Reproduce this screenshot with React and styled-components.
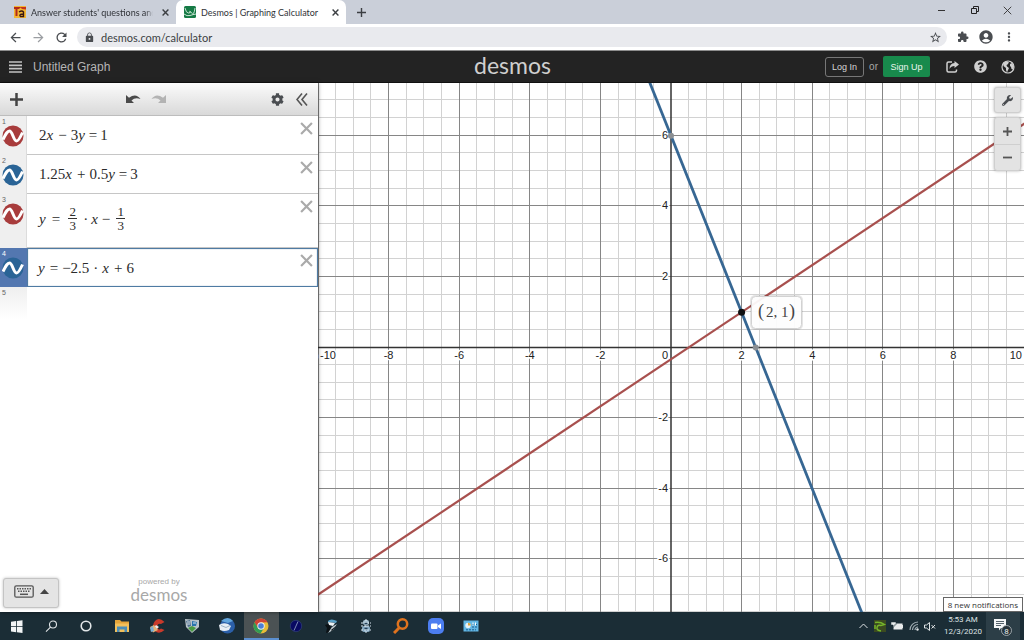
import React from "react";

import styled, { createGlobalStyle, css } from "styled-components";
import {
  MdAccountCircle,
  MdArrowBack,
  MdArrowForward,
  MdExtension,
  MdLock,
  MdMoreVert,
  MdRefresh,
  MdStarBorder,
} from "react-icons/md";
import { FaCog, FaQuestionCircle, FaWrench } from "react-icons/fa";

const GlobalStyle = createGlobalStyle`
  * {
    box-sizing: border-box;
  }
  body {
    margin: 0;
    overflow: hidden;
    font-family: "Liberation Sans", Arial, sans-serif;
  }
  button {
    margin: 0;
    padding: 0;
    border: 0;
    background: none;
    font: inherit;
    color: inherit;
  }
  svg {
    display: block;
    flex-shrink: 0;
  }
`;

const Page = styled.div`
  display: flex;
  flex-direction: column;
  height: 100vh;
  background: #fff;
`;

const IconButton = styled.button`
  display: flex;
  align-items: center;
  justify-content: center;
  flex-shrink: 0;
  width: ${(props) => props.$width || 24}px;
  height: ${(props) => props.$height || 24}px;
  color: ${(props) => props.$color || "#4a4d51"};
`;

/* browser window */

const TabStrip = styled.div`
  display: flex;
  height: 24px;
  background: #cacfd9;
  font-family: Lato, "Noto Sans", sans-serif;
  font-size: 9px;
`;

const Tab = styled.div`
  display: flex;
  align-items: center;
  gap: 5px;
  width: ${(props) => (props.$active ? 170 : 176)}px;
  padding-left: ${(props) => (props.$active ? 8 : 14)}px;
  border-radius: 7px 7px 0 0;
  color: #303338;
  background: ${(props) => (props.$active ? "#fff" : "transparent")};
`;

const TabTitle = styled.span`
  flex: 1;
  overflow: hidden;
  white-space: nowrap;
  ${(props) =>
    props.$fade &&
    css`
      margin-right: -4px;
      mask-image: linear-gradient(to right, #000 94%, transparent);
    `}
`;

const WindowControls = styled.div`
  display: flex;
  margin-left: auto;
  height: 20px;
`;

const AddressBar = styled.div`
  display: flex;
  align-items: center;
  height: 27px;
  padding-left: 4px;
  padding-right: 3px;
  border-bottom: 1px solid #8d8d8d;
  background: #fff;
`;

const UrlBox = styled.label`
  display: flex;
  align-items: center;
  flex: 1;
  height: 20px;
  margin: 0 5px 0 4px;
  padding-left: 7px;
  border-radius: 10px;
  background: #e9eaee;
  color: #4a4d51;
`;

const UrlInput = styled.input`
  flex: 1;
  min-width: 0;
  margin-left: 6px;
  padding: 0;
  border: 0;
  outline: 0;
  background: none;
  font-family: Lato, "Noto Sans", sans-serif;
  font-size: 11px;
  color: #3c3f43;
`;

/* calculator header */

const Header = styled.header`
  display: grid;
  grid-template-columns: 1fr auto 1fr;
  align-items: center;
  height: 32px;
  padding: 0 2px 0 3px;
  background: #232323;
  border-bottom: 1px solid #111;
  color: #c4c4c4;
  font-size: 12px;
`;

const HeaderSide = styled.div`
  display: flex;
  align-items: center;
  justify-content: ${(props) => (props.$right ? "flex-end" : "flex-start")};
`;

const GraphTitle = styled.button`
  margin-left: 6px;
  color: #b5b5b5;
`;

const Brand = styled.span`
  font-family: Lato, sans-serif;
  font-size: ${(props) => (props.$small ? 17 : 23)}px;
  line-height: ${(props) => (props.$small ? 18 : 28)}px;
  padding-bottom: ${(props) => (props.$small ? 0 : 3)}px;
  color: ${(props) => (props.$small ? "#a8a8a8" : "#cfcfcf")};
`;

const LogIn = styled.button`
  width: 39px;
  height: 20px;
  border: 1px solid #777;
  border-radius: 3px;
  color: #d6d6d6;
  font-size: 9px;
`;

const Or = styled.span`
  margin: 0 5px;
  font-size: 10px;
  color: #a8a8a8;
`;

const SignUp = styled.button`
  width: 47px;
  height: 21px;
  margin-right: 8px;
  border-radius: 2px;
  background: #188a4c;
  color: #eaf6ef;
  font-size: 9px;
`;

/* expression list */

const Main = styled.main`
  display: flex;
  flex: 1;
  min-height: 0;
`;

const Sidebar = styled.section`
  position: relative;
  z-index: 1;
  display: flex;
  flex-direction: column;
  width: 318px;
  background: #fff;
  box-shadow: 0 0 4px rgba(0, 0, 0, 0.5);
`;

const Toolbar = styled.div`
  display: flex;
  align-items: center;
  height: 33px;
  padding: 0 3px 0 4px;
  border-bottom: 1px solid #bdbdbd;
  background: linear-gradient(to bottom, #fbfbfb, #d9d9d9);
`;

const ToolbarSpace = styled.div`
  flex: ${(props) => props.$grow};
`;

const ExpressionList = styled.ol`
  margin: 0;
  padding: 0;
  list-style: none;
`;

const Row = styled.li`
  display: flex;
  height: ${(props) => (props.$tall ? 54 : 39)}px;
`;

const Gutter = styled.div`
  width: 27px;
  padding: 3px 2px 0 2px;
  border-right: 1px solid ${(props) => (props.$active ? "#5377b0" : "#dcdcdc")};
  background: ${(props) => (props.$active ? "#5377b0" : "#efefef")};
  color: ${(props) => (props.$active ? "#fff" : "#666")};
  font-size: 7px;
  line-height: 6px;
  ${(props) =>
    props.$last &&
    css`
      border-right: 0;
      background: linear-gradient(to bottom, #efefef, #fff 33px);
    `}
`;

const Expression = styled.div`
  display: flex;
  flex: 1;
  align-items: center;
  justify-content: space-between;
  padding-left: 12px;
  padding-bottom: ${(props) => (props.$tall ? 4 : 0)}px;
  border-bottom: 1px solid #c6c6c6;
  ${(props) =>
    props.$active &&
    css`
      padding-left: 10px;
      border: 1px solid #4f7ba3;
      box-shadow: inset 0 0 1px #4f7ba3;
    `}
`;

const Remove = styled(IconButton)`
  align-self: flex-start;
  margin-right: ${(props) => (props.$active ? 1 : 2)}px;
  margin-top: ${(props) => (props.$active ? 1 : 2)}px;
`;

const Formula = styled.span`
  display: inline-flex;
  align-items: center;
  font-family: "Liberation Serif", "Times New Roman", serif;
  font-size: 15px;
  line-height: 18px;
  color: #2b2b2b;
`;

const Variable = styled.i`
  margin-right: 1px;
`;

const Operator = styled.span`
  margin: 0 ${(props) => props.$space || 4}px;
`;

const Fraction = styled.span`
  display: inline-flex;
  flex-direction: column;
  align-items: center;
  width: 9px;
  margin: 0 3px;
  font-size: 13px;
  line-height: 13px;
`;

const Numerator = styled.span`
  width: 100%;
  border-bottom: 1px solid #333;
  text-align: center;
`;

const SidebarFooter = styled.footer`
  display: grid;
  grid-template-columns: 1fr auto 1fr;
  align-items: end;
  margin-top: auto;
  padding: 0 3px 4px;
`;

const KeyboardButton = styled.button`
  display: flex;
  align-items: center;
  justify-content: center;
  gap: 6px;
  width: 56px;
  height: 30px;
  padding-bottom: 3px;
  border: 1px solid #c4c4c4;
  border-radius: 3px;
  background: #e4e4e4;
  box-shadow: 0 0 3px rgba(0, 0, 0, 0.25);
`;

const PoweredBy = styled.div`
  display: flex;
  flex-direction: column;
  align-items: center;
  padding-bottom: 4px;
  color: #a8a8a8;
  font-size: 8px;
  line-height: 9px;
`;

/* graph paper */

const GraphPaper = styled.section`
  position: relative;
  flex: 1;
  min-width: 0;
  overflow: hidden;

  > svg {
    width: 100%;
    height: 100%;
  }
`;

const GraphControls = styled.div`
  position: absolute;
  top: 4px;
  right: 3px;
  display: flex;
  flex-direction: column;
  gap: 4px;
`;

const ControlGroup = styled.div`
  border: 1px solid #cfcfcf;
  border-radius: 3px;
  background: #e3e3e3;
  box-shadow: 0 0 3px rgba(0, 0, 0, 0.3);

  > button + button {
    border-top: 1px solid #cfcfcf;
  }
`;

const AxisLabel = styled.text`
  font-family: "Liberation Sans", Arial, sans-serif;
  font-size: 11px;
  fill: #222;
  stroke: #fff;
  stroke-width: 3px;
  paint-order: stroke;
`;

const PointLabel = styled.text`
  font-family: "Liberation Serif", "Times New Roman", serif;
  font-size: ${(props) => (props.$bracket ? 18 : 15)}px;
  fill: #444;
`;

/* windows taskbar */

const Taskbar = styled.footer`
  position: relative;
  display: flex;
  align-items: stretch;
  height: 28px;
  padding-right: 4px;
  background: #1b2d36;
  color: #dfe3e5;
  font-family: Roboto, "Noto Sans", sans-serif;
`;

const Apps = styled.nav`
  display: flex;
  width: 488px;
`;

const AppButton = styled.button`
  display: flex;
  flex: 1;
  align-items: center;
  justify-content: center;
  ${(props) =>
    props.$active &&
    css`
      background: #4b5254;
      box-shadow: inset 0 -2px #5b8fd0;
    `}
`;

const Tray = styled.div`
  display: flex;
  align-items: center;
  margin-left: auto;
`;

const Clock = styled.time`
  width: 46px;
  margin-left: 2px;
  padding-bottom: 1px;
  font-size: 8px;
  line-height: 12px;
  text-align: center;
  white-space: nowrap;
`;

const NotificationButton = styled.button`
  display: flex;
  align-items: center;
  justify-content: center;
  align-self: stretch;
  width: 34px;
  background: #2c3e47;
`;

const NotificationTip = styled.div`
  position: absolute;
  right: 1px;
  bottom: 28px;
  padding: 0 4px;
  border: 1px solid #666;
  background: #fff;
  color: #333;
  font-family: "Open Sans", "Noto Sans", sans-serif;
  font-size: 8px;
  line-height: 13px;
  white-space: nowrap;
`;

const Cross = ({ size, color, weight }) => (
  <svg width={size} height={size} viewBox="0 0 12 12">
    <path d="M1 1L11 11M11 1L1 11" stroke={color} strokeWidth={weight} />
  </svg>
);

const CurveBadge = ({ color, label }) => (
  <IconButton $width={22} $height={22} aria-label={label}>
    <svg width="22" height="22" viewBox="0 0 22 22">
      <circle cx="11" cy="11" r="10.500" fill={color} />
      <path
        d="M1 14.500C4 8.500 5.500 6 7.500 6C10.500 6 11.500 16 14.500 16C16.500 16 18.500 12 20.500 7.500"
        fill="none"
        stroke="#fff"
        strokeWidth="3"
      />
    </svg>
  </IconButton>
);

const BrowserTabs = () => (
  <TabStrip>
    <Tab>
      <svg width="12" height="12" viewBox="0 0 12 12">
        <rect width="12" height="12" fill="#f2b632" />
        <path d="M0 1H7L5 3H3.500V10H1.500V3H0Z" fill="#b22a1a" />
        <path d="M5 6Q8 4 9.500 6V10.500H6.500Q4.500 8 9 8" fill="none" stroke="#3a1710" strokeWidth="1.400" />
        <path d="M6 1H12V3.500L8 3Z" fill="#c5331d" />
      </svg>
      <TabTitle $fade>Answer students' questions and be</TabTitle>
      <IconButton $width={22} aria-label="Close tab">
        <Cross size={7} color="#3c3f43" weight={2.4} />
      </IconButton>
    </Tab>
    <Tab $active>
      <svg width="12" height="12" viewBox="0 0 12 12">
        <rect width="12" height="12" rx="1.500" fill="#157a45" />
        <path d="M1 2Q2 7 4.500 7T6 5.500T7.500 7T11 2" fill="none" stroke="#d9efe1" strokeWidth=".9" />
        <path d="M0 8Q3 10.500 6 9.500T12 8" fill="none" stroke="#d9efe1" strokeWidth=".9" />
      </svg>
      <TabTitle>Desmos | Graphing Calculator</TabTitle>
      <IconButton $width={22} aria-label="Close tab">
        <Cross size={7} color="#3c3f43" weight={2.4} />
      </IconButton>
    </Tab>
    <IconButton $width={31} aria-label="New tab">
      <svg width="9" height="9" viewBox="0 0 9 9">
        <path d="M4.500 0V9M0 4.500H9" stroke="#3c3f43" strokeWidth="1.400" />
      </svg>
    </IconButton>
    <WindowControls>
      <IconButton $width={33} $height={20} aria-label="Minimize">
        <svg width="8" height="8" viewBox="0 0 8 8">
          <path d="M0 4.500H7" stroke="#333" />
        </svg>
      </IconButton>
      <IconButton $width={33} $height={20} aria-label="Restore">
        <svg width="8" height="8" viewBox="0 0 8 8">
          <path d="M.5 2.500H5.500V7.500H.5ZM2.500 2.500V.5H7.500V5.500H5.500" fill="none" stroke="#222" />
        </svg>
      </IconButton>
      <IconButton $width={33} $height={20} aria-label="Close">
        <Cross size={9} color="#333" weight={1.2} />
      </IconButton>
    </WindowControls>
  </TabStrip>
);

const BrowserBar = () => (
  <AddressBar>
    <IconButton $width={23} aria-label="Back">
      <MdArrowBack size={15} />
    </IconButton>
    <IconButton $width={23} $color="#9b9ea2" aria-label="Forward">
      <MdArrowForward size={15} />
    </IconButton>
    <IconButton $width={23} aria-label="Reload">
      <MdRefresh size={15} />
    </IconButton>
    <UrlBox>
      <MdLock size={11} />
      <UrlInput aria-label="Address" defaultValue="desmos.com/calculator" />
      <IconButton aria-label="Bookmark">
        <MdStarBorder size={13} />
      </IconButton>
    </UrlBox>
    <IconButton $width={22} aria-label="Extensions">
      <MdExtension size={12} />
    </IconButton>
    <IconButton $width={23} aria-label="Profile">
      <MdAccountCircle size={16} />
    </IconButton>
    <IconButton aria-label="Menu">
      <MdMoreVert size={14} />
    </IconButton>
  </AddressBar>
);

const CalculatorHeader = () => (
  <Header>
    <HeaderSide>
      <IconButton $color="#c4c4c4" aria-label="Open graphs">
        <svg width="13" height="12" viewBox="0 0 13 12">
          <path d="M0 1H13M0 4.300H13M0 7.700H13M0 11H13" stroke="currentColor" strokeWidth="1.700" />
        </svg>
      </IconButton>
      <GraphTitle>Untitled Graph</GraphTitle>
    </HeaderSide>
    <Brand>desmos</Brand>
    <HeaderSide $right>
      <LogIn>Log In</LogIn>
      <Or>or</Or>
      <SignUp>Sign Up</SignUp>
      <IconButton $width={28} $color="#d0d0d0" aria-label="Share">
        <svg width="13" height="12" viewBox="0 0 13 12">
          <path d="M6 1H2.500Q1 1 1 2.500V9.500Q1 11 2.500 11H9Q10.500 11 10.500 9.500V8.500" fill="none" stroke="currentColor" strokeWidth="1.500" />
          <path d="M8.500 0L13 3.500L8.500 7V5Q5 5 3.500 8Q3.500 2.500 8.500 2Z" fill="currentColor" />
        </svg>
      </IconButton>
      <IconButton $width={28} $color="#d0d0d0" aria-label="Help">
        <FaQuestionCircle size={13} />
      </IconButton>
      <IconButton $width={28} $color="#d0d0d0" aria-label="Language">
        <svg width="14" height="14" viewBox="0 0 14 14">
          <circle cx="7" cy="7" r="6" fill="none" stroke="currentColor" strokeWidth="1.200" />
          <path d="M2 3L6 1.200L8 2.500L6.500 4.500L5.500 5L6 6.500L8 8L7 10L6 12.500L5 10V8L2.500 6ZM9 4L11 3L13 6.500L12 9.500L10.500 9L10 7L9 6Z" fill="currentColor" />
        </svg>
      </IconButton>
    </HeaderSide>
  </Header>
);

const expressions = [
  {
    color: "#a83c3c",
    formula: (
      <>
        2<Variable>x</Variable>
        <Operator>−</Operator>3<Variable>y</Variable>
        <Operator $space={3}>=</Operator>1
      </>
    ),
  },
  {
    color: "#2a6496",
    formula: (
      <>
        1.25<Variable>x</Variable>
        <Operator>+</Operator>0.5<Variable>y</Variable>
        <Operator $space={3}>=</Operator>3
      </>
    ),
  },
  {
    color: "#a83c3c",
    tall: true,
    formula: (
      <>
        <Variable>y</Variable>
        <Operator $space={5}>=</Operator>
        <Fraction>
          <Numerator>2</Numerator>3
        </Fraction>
        <Operator $space={3}>·</Operator>
        <Variable>x</Variable>
        <Operator $space={3}>−</Operator>
        <Fraction>
          <Numerator>1</Numerator>3
        </Fraction>
      </>
    ),
  },
  {
    color: "#2a6496",
    active: true,
    formula: (
      <>
        <Variable>y</Variable>
        <Operator>=</Operator>−2.5
        <Operator>·</Operator>
        <Variable>x</Variable>
        <Operator>+</Operator>6
      </>
    ),
  },
];

const ExpressionPanel = () => (
  <Sidebar>
    <Toolbar>
      <IconButton aria-label="Add item">
        <svg width="13" height="13" viewBox="0 0 13 13">
          <path d="M6.500 0V13M0 6.500H13" stroke="#444" strokeWidth="2.500" />
        </svg>
      </IconButton>
      <ToolbarSpace $grow={92} />
      <IconButton $width={26} aria-label="Undo">
        <svg width="16" height="12" viewBox="0 0 16 12">
          <path d="M1 2V10H9L6.500 7.500Q10 4 15.500 6Q11 -.5 4 4.700Z" fill="#4a4a4a" />
        </svg>
      </IconButton>
      <IconButton $width={26} aria-label="Redo">
        <svg width="16" height="12" viewBox="0 0 16 12">
          <path d="M15 2V10H7L9.500 7.500Q6 4 .5 6Q5 -.5 12 4.700Z" fill="#b3b3b3" />
        </svg>
      </IconButton>
      <ToolbarSpace $grow={93} />
      <IconButton aria-label="Edit list">
        <FaCog size={13} />
      </IconButton>
      <IconButton $width={26} aria-label="Hide list">
        <svg width="12" height="13" viewBox="0 0 12 13">
          <path d="M6 .5L1 6.500L6 12.500M11 .5L6 6.500L11 12.500" fill="none" stroke="#555" strokeWidth="1.600" />
        </svg>
      </IconButton>
    </Toolbar>
    <ExpressionList>
      {expressions.map(({ color, formula, active, tall }, index) => (
        <Row key={index} $tall={tall}>
          <Gutter $active={active}>
            {index + 1}
            <CurveBadge color={color} label={`Hide expression ${index + 1}`} />
          </Gutter>
          <Expression $active={active} $tall={tall}>
            <Formula>{formula}</Formula>
            <Remove $width={20} $height={20} $active={active} aria-label="Delete expression">
              <Cross size={13} color="#aaa" weight={2} />
            </Remove>
          </Expression>
        </Row>
      ))}
      <Row>
        <Gutter $last>5</Gutter>
      </Row>
    </ExpressionList>
    <SidebarFooter>
      <KeyboardButton aria-label="Show keypad">
        <svg width="20" height="13" viewBox="0 0 20 13">
          <rect x=".8" y=".8" width="18.400" height="11.400" rx="1.500" fill="none" stroke="#555" strokeWidth="1.300" />
          <path d="M3 3.700H17M4 6.300H16" stroke="#555" strokeWidth="1.500" strokeDasharray="1.500 1" />
          <path d="M6 9.300H14" stroke="#555" strokeWidth="1.500" />
        </svg>
        <svg width="9" height="5" viewBox="0 0 9 5">
          <path d="M0 5L4.500 0L9 5Z" fill="#444" />
        </svg>
      </KeyboardButton>
      <PoweredBy>
        powered by
        <Brand $small>desmos</Brand>
      </PoweredBy>
    </SidebarFooter>
  </Sidebar>
);

const UNIT = 35.3;
const toX = (x) => 353 + x * UNIT;
const toY = (y) => 264.5 - y * UNIT;
const halfSteps = Array.from({ length: 121 }, (_, i) => (i - 60) / 2);
const minorSteps = halfSteps.filter((n) => n % 2 !== 0);
const majorSteps = halfSteps.filter((n) => n % 2 === 0 && n !== 0);

// centre every line on a whole pixel
const gridPath = (steps) =>
  steps
    .map((n) => `M${Math.round(toX(n) - 0.5) + 0.5} -400V900M-700 ${Math.round(toY(n) - 1) + 0.5}H1400`)
    .join("");

const Graph = () => (
  <GraphPaper>
    <svg viewBox="0 0 706 529" preserveAspectRatio="xMidYMid slice" role="img" aria-label="Graph">
      <path d={gridPath(minorSteps)} stroke="#d2d2d2" />
      <path d={gridPath(majorSteps)} stroke="#868686" />
      <path d="M353 -400V900M-700 264.500H1400" stroke="#333" strokeWidth="1.500" />
      {[-8, -6, -4, -2, 2, 4, 6, 8].map((n) => (
        <AxisLabel key={n} x={toX(n)} y="276" textAnchor="middle">
          {n}
        </AxisLabel>
      ))}
      <AxisLabel x="2" y="276">-10</AxisLabel>
      <AxisLabel x="704" y="276" textAnchor="end">10</AxisLabel>
      <AxisLabel x="350" y="276" textAnchor="end">0</AxisLabel>
      {[-6, -4, -2, 2, 4, 6].map((n) => (
        <AxisLabel key={n} x="350" y={toY(n) + 3} textAnchor="end">
          {n}
        </AxisLabel>
      ))}
      <path
        d={`M${toX(-20)} ${toY(-41 / 3)}L${toX(20)} ${toY(13)}`}
        stroke="#a8504e"
        strokeWidth="2.200"
      />
      <path
        d={`M${toX(-4)} ${toY(16)}L${toX(12)} ${toY(-24)}`}
        stroke="#376793"
        strokeWidth="2.800"
      />
      <circle cx={toX(0)} cy={toY(6)} r="3" fill="#8b8f93" />
      <circle cx={toX(2.4)} cy={toY(0)} r="3" fill="#8b8f93" />
      <circle cx={toX(2)} cy={toY(1)} r="3.500" fill="#111" />
      <rect x="432" y="212" width="53" height="35" rx="5" fill="#000" opacity=".1" />
      <rect x="433.500" y="213.500" width="50" height="32" rx="4" fill="#fff" fillOpacity=".93" stroke="#d2d2d2" />
      <PointLabel $bracket x="440" y="234">(</PointLabel>
      <PointLabel x="448" y="234">2, 1</PointLabel>
      <PointLabel $bracket x="471" y="234">)</PointLabel>
    </svg>
    <GraphControls>
      <ControlGroup>
        <IconButton $width={25} aria-label="Graph settings">
          <FaWrench size={11} />
        </IconButton>
      </ControlGroup>
      <ControlGroup>
        <IconButton $width={25} $height={26} aria-label="Zoom in">
          <svg width="9" height="9" viewBox="0 0 9 9">
            <path d="M4.500 0V9M0 4.500H9" stroke="#555" strokeWidth="1.800" />
          </svg>
        </IconButton>
        <IconButton $width={25} $height={26} aria-label="Zoom out">
          <svg width="9" height="9" viewBox="0 0 9 9">
            <path d="M0 4.500H9" stroke="#555" strokeWidth="1.800" />
          </svg>
        </IconButton>
      </ControlGroup>
    </GraphControls>
  </GraphPaper>
);

const apps = [
  {
    name: "Start",
    icon: <path d="M2 3.700L7.200 3V8.200H2ZM8 2.900L13.500 2.200V8.200H8ZM2 9H7.200V14.200L2 13.500ZM8 9H13.500V15L8 14.300Z" fill="#f2f4f5" />,
  },
  {
    name: "Search",
    icon: (
      <g fill="none" stroke="#e2e6e8" strokeWidth="1.100">
        <circle cx="9" cy="6.500" r="3.500" />
        <path d="M6.500 9.200L2 13.700" />
      </g>
    ),
  },
  {
    name: "Cortana",
    icon: <circle cx="7" cy="8" r="4.800" fill="none" stroke="#e2e6e8" strokeWidth="1.600" />,
  },
  {
    name: "File Explorer",
    icon: (
      <>
        <path d="M1 2H6L7.500 3.500H15V14H1Z" fill="#e4a43a" />
        <path d="M1 5.500H15V14H1Z" fill="#f2c05c" />
        <path d="M3 14V8.500H13V14H10.500V11.500H5.500V14Z" fill="#4b8db8" />
      </>
    ),
  },
  {
    name: "CCleaner",
    icon: (
      <>
        <path d="M15.500 4Q10 -1.500 6 3T6 13Q10 17 15.500 12L12 10.500Q9 13 8.500 9T12 6Z" fill="#c93a2b" />
        <path d="M7 7L10 9L7 11.500L5 9.500Z" fill="#e9edf0" />
        <path d="M1 9L5 7L9 12L4 14.500Z" fill="#e6b47a" />
        <path d="M1 10L4 8L5 13L2 14Z" fill="#78aed2" />
      </>
    ),
  },
  {
    name: "System Monitor",
    icon: (
      <>
        <path d="M1 1L15 2L15 9L8 15L2 9Z" fill="#b9c3c9" />
        <path d="M2 3L6 2L7 8L4 9Z" fill="#4c6f8d" />
        <path d="M8 3L13 4L12 8H8Z" fill="#2a74ae" />
        <path d="M4 10L8 8L12 10L8 14Z" fill="#4a9b42" />
        <path d="M3 4H6M3 6H6M9 5H12" stroke="#fff" strokeWidth=".8" />
      </>
    ),
  },
  {
    name: "Thunderbird",
    icon: (
      <>
        <circle cx="8.500" cy="8" r="7.500" fill="#2b5fa8" />
        <path d="M2 3Q9 -3 14 3L9 5Z" fill="#63a6dd" />
        <path d="M0 7Q4 4 9 6L12 8L10 12Q5 14 1 12Z" fill="#e8eef5" />
        <path d="M2 7.500L7 9.500L11 7.500" fill="none" stroke="#9db3c8" />
      </>
    ),
  },
  {
    name: "Chrome",
    active: true,
    icon: (
      <>
        <circle cx="8" cy="8" r="7.500" fill="#e7bc37" />
        <path d="M1.500 4.200A7.500 7.500 0 0 1 14.500 4.200L8 4.500ZM1.500 4.200L5 10.500L8 4.500Z" fill="#cf4336" />
        <path d="M1.500 4.200L5 10L11 10L7.500 15.500A7.500 7.500 0 0 1 1.500 4.200Z" fill="#339c55" />
        <circle cx="8" cy="8" r="3.700" fill="#f1f1f1" />
        <circle cx="8" cy="8" r="2.800" fill="#4a7fd6" />
      </>
    ),
  },
  {
    name: "Compass",
    icon: (
      <>
        <circle cx="8" cy="8" r="5.700" fill="#090963" stroke="#27356c" />
        <path d="M10 3.500L6 12.500" stroke="#8998bd" strokeWidth=".9" />
      </>
    ),
  },
  {
    name: "Media Tool",
    icon: (
      <>
        <path d="M5 3Q8 0 14 3L13 5L5 4Z" fill="#5aa1c8" />
        <path d="M5 4L12 5L10 8L6 7Z" fill="#eef2f4" />
        <path d="M2 7L5 6L8 9L6 14L3 15L4 10Z" fill="#0b1115" />
        <path d="M14 6L10 12L5 15L9 9Z" fill="#c3ccd1" />
        <path d="M13 8L9 13L8 12Z" fill="#0b1115" />
      </>
    ),
  },
  {
    name: "Utility",
    icon: (
      <>
        <rect x="5" y="2" width="6" height="5" rx="2" fill="#a9c3d4" />
        <rect x="4" y="8" width="8" height="6" rx="2" fill="#86a9c2" />
        <path d="M3 5H13M3 8H13M3 12H13M8 1V15" stroke="#d9e6ef" strokeDasharray="2 1" />
        <path d="M6.500 5.500H9.500M6.500 10.500H9.500" stroke="#233f56" strokeWidth="1.500" />
      </>
    ),
  },
  {
    name: "File Search",
    icon: (
      <g fill="none" stroke="#e0731e">
        <circle cx="9.500" cy="6" r="4.700" strokeWidth="2.500" />
        <path d="M6.500 9.500L1 15" strokeWidth="3" />
      </g>
    ),
  },
  {
    name: "Zoom",
    icon: (
      <>
        <rect width="16" height="16" rx="5" fill="#4c7df0" />
        <rect x="3" y="5.500" width="6.500" height="5.500" rx="1" fill="#fff" />
        <path d="M10 7.500L13 5.500V11L10 9Z" fill="#fff" />
      </>
    ),
  },
  {
    name: "Control Panel",
    icon: (
      <>
        <rect x=".5" y="2.500" width="15" height="11" fill="#62b6e4" />
        <circle cx="5" cy="7.500" r="2.700" fill="#e7f2f8" />
        <path d="M5 7.500V4.800A2.700 2.700 0 0 1 7.700 7.500Z" fill="#e0a63a" />
        <path d="M9 6.500H14M9 9H14M3 11.800H13" stroke="#1d5f91" strokeDasharray="2 1" />
        <path d="M10 4.500V7.500M12.500 4.500V7.500" stroke="#fff" />
      </>
    ),
  },
];

const WindowsTaskbar = () => (
  <Taskbar>
    <Apps>
      {apps.map(({ name, icon, active }) => (
        <AppButton key={name} $active={active} aria-label={name}>
          <svg width="16" height="16" viewBox="0 0 16 16">
            {icon}
          </svg>
        </AppButton>
      ))}
    </Apps>
    <Tray>
      <IconButton $width={16} aria-label="Show hidden icons">
        <svg width="9" height="6" viewBox="0 0 9 6">
          <path d="M.5 5L4.500 1L8.500 5" fill="none" stroke="#dfe3e5" />
        </svg>
      </IconButton>
      <IconButton $width={17} aria-label="Graphics settings">
        <svg width="12" height="12" viewBox="0 0 12 12">
          <rect width="12" height="12" fill="#3b4a20" />
          <path d="M1 2.500Q6 1.500 10.500 4.500L7 5.500Q3.500 4.500 3 7.500T7 11M1 5V9" fill="none" stroke="#76b52b" strokeWidth="1.500" />
        </svg>
      </IconButton>
      <IconButton $width={18} aria-label="Battery">
        <svg width="12" height="10" viewBox="0 0 12 10">
          <rect x="3" y="3" width="8" height="5" fill="#e8ebec" stroke="#e8ebec" />
          <path d="M0 1H5V4H3V6H2V4H0Z" fill="#e8ebec" stroke="#1b2d36" strokeWidth=".5" />
          <path d="M11.500 4V7" stroke="#e8ebec" />
        </svg>
      </IconButton>
      <IconButton $width={16} aria-label="Network">
        <svg width="10" height="10" viewBox="0 0 10 10">
          <path d="M1 9A8 8 0 0 1 9 1M3.500 9A5.500 5.500 0 0 1 9 3.500M6 9A3 3 0 0 1 9 6" fill="none" stroke="#9eabb1" strokeWidth="1.200" />
          <circle cx="8.500" cy="8.500" r="1.200" fill="#dfe3e5" />
        </svg>
      </IconButton>
      <IconButton $width={16} aria-label="Volume muted">
        <svg width="12" height="9" viewBox="0 0 12 9">
          <path d="M.5 3H2.500L5.500 .5V8.500L2.500 6H.5Z" fill="none" stroke="#dfe3e5" />
          <path d="M7.500 3L11 6.500M11 3L7.500 6.500" stroke="#dfe3e5" />
        </svg>
      </IconButton>
      <Clock>
        5:53 AM
        <br />
        12/3/2020
      </Clock>
      <NotificationButton aria-label="Notifications">
        <svg width="22" height="22" viewBox="0 0 22 22">
          <path d="M2 4H14V13H9L7 15.500V13H2Z" fill="#f4f6f7" />
          <path d="M4 6.500H12M4 8.500H12M4 10.500H9" stroke="#2c3e47" strokeWidth=".8" />
          <circle cx="14.500" cy="15.500" r="5" fill="#27343b" stroke="#b6bec2" strokeWidth=".8" />
          <text x="14.500" y="18.500" textAnchor="middle" fontSize="8" fill="#eef1f2">8</text>
        </svg>
      </NotificationButton>
    </Tray>
    <NotificationTip role="status">8 new notifications</NotificationTip>
  </Taskbar>
);

const App = () => (
  <Page>
    <GlobalStyle />
    <BrowserTabs />
    <BrowserBar />
    <CalculatorHeader />
    <Main>
      <ExpressionPanel />
      <Graph />
    </Main>
    <WindowsTaskbar />
  </Page>
);

export default App;
